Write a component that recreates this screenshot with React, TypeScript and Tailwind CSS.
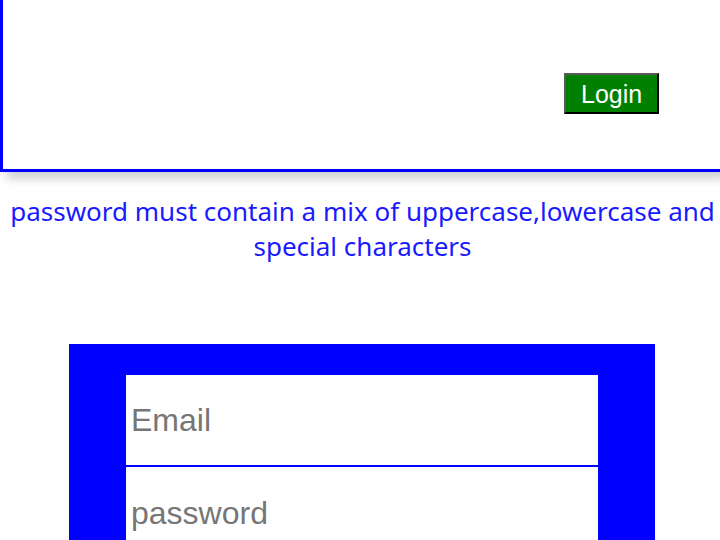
export default function App() {
  return (
    <div className="w-[720px] h-[540px] overflow-hidden bg-white">
      <div className="h-[172px] border-l-[3px] border-b-[3px] border-[#0000ff] bg-white shadow-[6px_7px_9px_rgba(0,0,0,0.18)] pt-[73px] pl-[561px]">
        <button
          className="h-[41px] px-[15px] bg-[#008000] text-white text-[25px] leading-[28px] border-2 border-t-[#5a5a5a] border-l-[#5a5a5a] border-r-black border-b-black"
          style={{ fontFamily: '"Liberation Sans", Arial, sans-serif' }}
        >
          Login
        </button>
      </div>
      <p
        className="mt-[22px] pl-[5px] text-center text-[#1a1aff] text-[26px] leading-[35px]"
        style={{ fontFamily: '"Noto Sans", "Open Sans", sans-serif' }}
      >
        password must contain a mix of uppercase,lowercase and special characters
      </p>
      <div className="mt-[80px] ml-[69px] w-[586px] h-[300px] bg-[#0000ff] pt-[31px] pl-[57px]">
        <div className="w-[472px] flex flex-col" style={{ fontFamily: '"Liberation Sans", Arial, sans-serif' }}>
          <input
            placeholder="Email"
            className="h-[92px] bg-white border-b-2 border-[#0000ff] px-[5px] text-[32px] placeholder:text-[#767676] outline-none"
          />
          <input
            placeholder="password"
            type="password"
            className="h-[92px] bg-white px-[5px] text-[32px] placeholder:text-[#767676] outline-none"
          />
        </div>
      </div>
    </div>
  );
}
